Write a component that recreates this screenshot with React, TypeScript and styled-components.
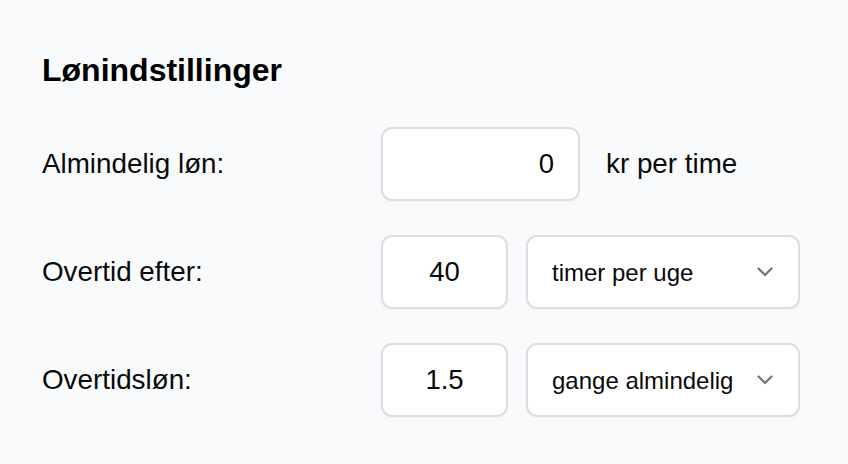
import React from "react";
import styled, { createGlobalStyle } from "styled-components";

const GlobalStyle = createGlobalStyle`
  html, body {
    margin: 0;
    padding: 0;
    background: #f9fafb;
    font-family: "Liberation Sans", Arial, Helvetica, sans-serif;
    color: #0a0a0a;
  }
`;

const Panel = styled.section`
  width: 848px;
  height: 464px;
  box-sizing: border-box;
  padding: 52px 48px 0 42px;
  background: #f9fafb;
`;

const Title = styled.h2`
  margin: 0 0 39px;
  font-size: 32px;
  line-height: 36px;
  font-weight: 700;
  color: #000;
`;

const Form = styled.div`
  display: grid;
  grid-template-columns: 339px auto;
  row-gap: 34px;
  align-items: center;
`;

const Label = styled.label`
  font-size: 27.8px;
  color: #0a0a0a;
`;

const Controls = styled.div`
  display: flex;
  align-items: center;
  gap: 18px;
`;

const NumberBox = styled.input<{ $width: number; $align: "right" | "center" }>`
  box-sizing: border-box;
  width: ${(p) => p.$width}px;
  height: 74px;
  padding: 0 24px;
  border: 2px solid #dcdee3;
  border-radius: 11px;
  background: #fff;
  box-shadow: 0 1px 2px rgba(0, 0, 0, 0.04);
  font-family: inherit;
  font-size: 27.5px;
  color: #0a0a0a;
  text-align: ${(p) => p.$align};
  outline: none;
`;

const Unit = styled.span`
  margin-left: 8px;
  font-size: 27.8px;
  color: #0a0a0a;
`;

const SelectWrap = styled.div`
  position: relative;
  width: 274px;
  height: 74px;
`;

const Select = styled.select`
  appearance: none;
  -webkit-appearance: none;
  box-sizing: border-box;
  width: 100%;
  height: 100%;
  padding: 0 50px 0 24px;
  border: 2px solid #dcdee3;
  border-radius: 11px;
  background: #fff;
  box-shadow: 0 1px 2px rgba(0, 0, 0, 0.04);
  font-family: inherit;
  font-size: 24px;
  color: #0a0a0a;
  outline: none;
`;

const Chevron = styled.svg`
  position: absolute;
  right: 27px;
  top: 50%;
  width: 16px;
  height: 10px;
  margin-top: -5px;
  pointer-events: none;
`;

const Dropdown = ({ value, options }: { value: string; options: string[] }) => (
  <SelectWrap>
    <Select defaultValue={value}>
      {options.map((o) => (
        <option key={o}>{o}</option>
      ))}
    </Select>
    <Chevron viewBox="0 0 16 10" fill="none">
      <polyline
        points="1.5,1.5 8,8 14.5,1.5"
        stroke="#6b7280"
        strokeWidth="2.2"
        strokeLinecap="round"
        strokeLinejoin="round"
      />
    </Chevron>
  </SelectWrap>
);

export default function App() {
  return (
    <>
      <GlobalStyle />
      <Panel>
        <Title>Lønindstillinger</Title>
        <Form>
          <Label>Almindelig løn:</Label>
          <Controls>
            <NumberBox $width={199} $align="right" defaultValue="0" />
            <Unit>kr per time</Unit>
          </Controls>

          <Label>Overtid efter:</Label>
          <Controls>
            <NumberBox $width={127} $align="center" defaultValue="40" />
            <Dropdown value="timer per uge" options={["timer per uge", "timer per dag"]} />
          </Controls>

          <Label>Overtidsløn:</Label>
          <Controls>
            <NumberBox $width={127} $align="center" defaultValue="1.5" />
            <Dropdown value="gange almindelig" options={["gange almindelig", "kr per time"]} />
          </Controls>
        </Form>
      </Panel>
    </>
  );
}
